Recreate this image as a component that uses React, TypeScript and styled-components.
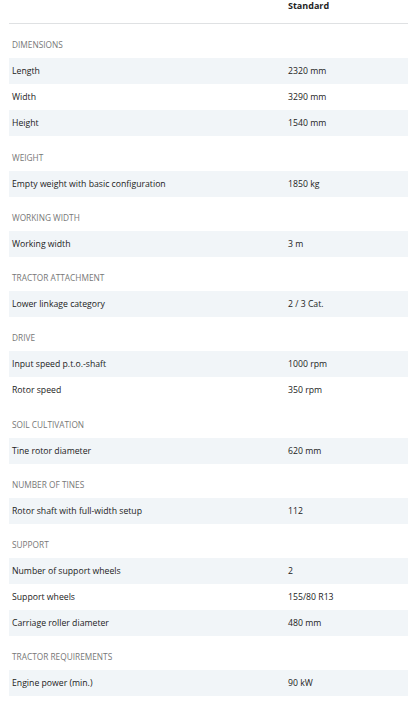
import React from "react";
import styled, { createGlobalStyle } from "styled-components";

type Spec = { label: string; value: string };
type Group = { title: string; rows: Spec[] };

const groups: Group[] = [
  {
    title: "Dimensions",
    rows: [
      { label: "Length", value: "2320 mm" },
      { label: "Width", value: "3290 mm" },
      { label: "Height", value: "1540 mm" },
    ],
  },
  {
    title: "Weight",
    rows: [{ label: "Empty weight with basic configuration", value: "1850 kg" }],
  },
  {
    title: "Working width",
    rows: [{ label: "Working width", value: "3 m" }],
  },
  {
    title: "Tractor attachment",
    rows: [{ label: "Lower linkage category", value: "2 / 3 Cat." }],
  },
  {
    title: "Drive",
    rows: [
      { label: "Input speed p.t.o.-shaft", value: "1000 rpm" },
      { label: "Rotor speed", value: "350 rpm" },
    ],
  },
  {
    title: "Soil cultivation",
    rows: [{ label: "Tine rotor diameter", value: "620 mm" }],
  },
  {
    title: "Number of tines",
    rows: [{ label: "Rotor shaft with full-width setup", value: "112" }],
  },
  {
    title: "Support",
    rows: [
      { label: "Number of support wheels", value: "2" },
      { label: "Support wheels", value: "155/80 R13" },
      { label: "Carriage roller diameter", value: "480 mm" },
    ],
  },
  {
    title: "Tractor requirements",
    rows: [{ label: "Engine power (min.)", value: "90 kW" }],
  },
];

function App() {
  return (
    <>
      <GlobalStyle />
      <SpecTable>
        <HeadRow>
          <HeadCell />
          <HeadCell>Standard</HeadCell>
        </HeadRow>
        {groups.map((group) => (
          <GroupBlock key={group.title}>
            <GroupTitle>{group.title}</GroupTitle>
            {group.rows.map((row, i) => (
              <Row key={row.label} $shaded={i % 2 === 0}>
                <LabelCell>{row.label}</LabelCell>
                <ValueCell>{row.value}</ValueCell>
              </Row>
            ))}
          </GroupBlock>
        ))}
      </SpecTable>
    </>
  );
}

export default App;

const GlobalStyle = createGlobalStyle`
  html, body {
    margin: 0;
    padding: 0;
    background: #ffffff;
  }
  body {
    font-family: "Open Sans", "Noto Sans", sans-serif;
    color: #222222;
  }
`;

const SpecTable = styled.div`
  display: flex;
  flex-direction: column;
  margin-left: 9px;
`;

const HeadRow = styled.div`
  display: grid;
  grid-template-columns: 276px 1fr;
  height: 23px;
  border-bottom: 1px solid #dfe1e3;
`;

const HeadCell = styled.div`
  padding-left: 3px;
  font-size: 9px;
  font-weight: 700;
  line-height: 12px;
  color: #1f1f1f;
`;

const GroupBlock = styled.div`
  display: flex;
  flex-direction: column;
`;

const GroupTitle = styled.div`
  height: 34.25px;
  box-sizing: border-box;
  display: flex;
  align-items: flex-end;
  padding: 0 0 7px 3px;
  font-size: 8.3px;
  font-weight: 400;
  line-height: 12px;
  text-transform: uppercase;
  color: #777777;
`;

const Row = styled.div<{ $shaded: boolean }>`
  display: grid;
  grid-template-columns: 276px 1fr;
  align-items: center;
  height: 26px;
  background: ${(p) => (p.$shaded ? "#f1f5f8" : "#ffffff")};
`;

const LabelCell = styled.div`
  padding-left: 3px;
  font-size: 8.7px;
  line-height: 12px;
  color: #222222;
`;

const ValueCell = styled.div`
  padding-left: 3px;
  font-size: 8.7px;
  line-height: 12px;
  color: #222222;
`;
